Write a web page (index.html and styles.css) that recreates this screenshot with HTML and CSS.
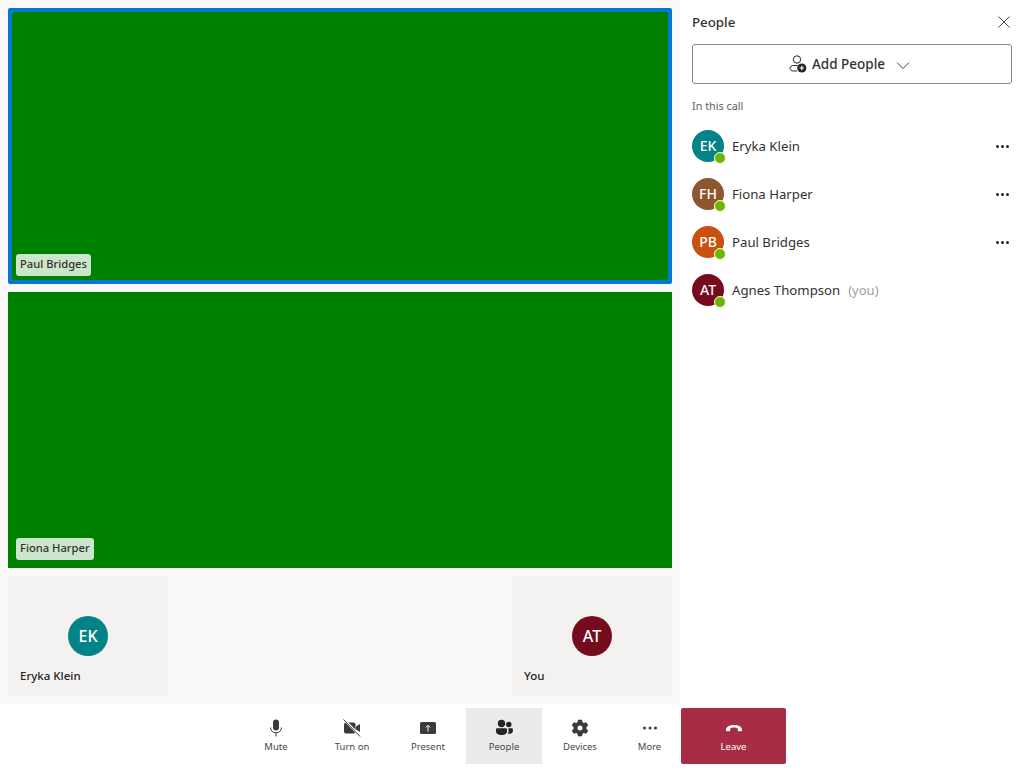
FILE: index.html
```html
<!DOCTYPE html>
<html lang="en">
<head>
    <meta charset="UTF-8">
    <title>People</title>
    <link rel="stylesheet" href="styles.css">
</head>
<body>
    <div class="top">
        <main class="stage">
            <section class="video video-active">
                <span class="name-tag">Paul Bridges</span>
            </section>
            <section class="video">
                <span class="name-tag">Fiona Harper</span>
            </section>
            <div class="tile-row">
                <div class="tile">
                    <span class="avatar avatar-big teal">EK</span>
                    <span class="tile-name">Eryka Klein</span>
                </div>
                <div class="tile">
                    <span class="avatar avatar-big maroon">AT</span>
                    <span class="tile-name">You</span>
                </div>
            </div>
        </main>
        <aside class="panel">
            <div class="panel-head">
                <h2>People</h2>
                <svg class="close-icon" width="14" height="14" viewBox="0 0 14 14"><path d="M1.5 1.5l11 11M12.5 1.5l-11 11" stroke="#484644" stroke-width="1" fill="none"/></svg>
            </div>
            <button class="add-btn">
                <svg width="20" height="20" viewBox="0 0 20 20"><circle cx="9" cy="5.5" r="3.7" fill="none" stroke="#252423" stroke-width="1"/><path d="M9.5 11.5H5.5C3.5 11.5 2 12.6 2 14.3C2 16 3.5 17 5.5 17H9" fill="none" stroke="#252423" stroke-width="1"/><circle cx="13.8" cy="14" r="4.6" fill="#252423"/><path d="M13.8 11.8v4.4M11.6 14h4.4" stroke="#fff" stroke-width="1.2"/></svg>
                <span>Add People</span>
                <svg class="chevron" width="14" height="14" viewBox="0 0 14 14"><path d="M1 4.5L7 10.500l6-6" fill="none" stroke="#484644" stroke-width="1"/></svg>
            </button>
            <p class="section-label">In this call</p>
            <ul class="people">
                <li>
                    <span class="avatar teal">EK<i class="status"></i></span>
                    <span class="person">Eryka Klein</span>
                    <span class="dots"><i></i><i></i><i></i></span>
                </li>
                <li>
                    <span class="avatar brown">FH<i class="status"></i></span>
                    <span class="person">Fiona Harper</span>
                    <span class="dots"><i></i><i></i><i></i></span>
                </li>
                <li>
                    <span class="avatar orange">PB<i class="status"></i></span>
                    <span class="person">Paul Bridges</span>
                    <span class="dots"><i></i><i></i><i></i></span>
                </li>
                <li>
                    <span class="avatar maroon">AT<i class="status"></i></span>
                    <span class="person">Agnes Thompson</span>
                    <span class="you">(you)</span>
                </li>
            </ul>
        </aside>
    </div>
    <nav class="toolbar">
        <button class="tool">
            <svg width="20" height="20" viewBox="0 0 20 20"><rect x="7" y="1.5" width="6" height="11" rx="3" fill="#3b3a39"/><path d="M4.5 9.5c0 3.2 2.4 5.3 5.5 5.3s5.500-2.100 5.500-5.300M10 15v3.500" fill="none" stroke="#3b3a39" stroke-width="1"/></svg>
            <span>Mute</span>
        </button>
        <button class="tool">
            <svg width="20" height="20" viewBox="0 0 20 20"><rect x="2" y="4.500" width="11.500" height="11" rx="2" fill="#3b3a39"/><path d="M14 8.500l4-2.500v8l-4-2.500z" fill="#3b3a39"/><path d="M2 1.500L18 18" stroke="#fff" stroke-width="2.400"/><path d="M1.500 1.500L18 18.500" stroke="#3b3a39" stroke-width="1"/></svg>
            <span>Turn on</span>
        </button>
        <button class="tool">
            <svg width="20" height="20" viewBox="0 0 20 20"><rect x="2" y="4" width="16" height="12" rx="1.500" fill="#3b3a39"/><path d="M10 13.500V7.500M7.800 9.500L10 7.300l2.200 2.200" fill="none" stroke="#fff" stroke-width="1"/></svg>
            <span>Present</span>
        </button>
        <button class="tool tool-on">
            <svg width="20" height="20" viewBox="0 0 20 20"><circle cx="7.500" cy="5.500" r="3.700" fill="#252423"/><circle cx="14.800" cy="6.500" r="2.700" fill="#252423"/><path d="M2 11.500c0-.8.600-1.300 1.300-1.300h8.400c.7 0 1.300.5 1.300 1.300v2c0 2.100-2.300 3.500-5.500 3.500S2 15.600 2 13.500z" fill="#252423"/><path d="M14 10.200h3.600c.7 0 1.300.5 1.300 1.300v1.500c0 2-1.800 3-4.800 3 .3-.7.400-1.500.400-2.500v-2c0-.700-.100-1.200-.500-1.800z" fill="#252423"/></svg>
            <span>People</span>
        </button>
        <button class="tool">
            <svg width="20" height="20" viewBox="0 0 20 20"><path fill-rule="evenodd" fill="#3b3a39" d="M8 1.800h4l.6 2.400 1.200.7 2.400-.7 2 3.400-1.800 1.700v1.400l1.800 1.700-2 3.400-2.400-.7-1.200.7-.6 2.400H8l-.6-2.400-1.200-.7-2.400.7-2-3.400 1.800-1.700V9.300L1.800 7.600l2-3.400 2.400.7 1.200-.7zM10 7.500a2.500 2.500 0 1 0 0 5 2.500 2.500 0 0 0 0-5z"/></svg>
            <span>Devices</span>
        </button>
        <button class="tool tool-more">
            <svg width="20" height="20" viewBox="0 0 20 20"><circle cx="4.500" cy="10" r="1.500" fill="#3b3a39"/><circle cx="10" cy="10" r="1.500" fill="#3b3a39"/><circle cx="15.500" cy="10" r="1.500" fill="#3b3a39"/></svg>
            <span>More</span>
        </button>
        <button class="tool tool-leave">
            <svg width="20" height="20" viewBox="0 0 20 20"><path fill="#fff" d="M2 11.500C2 9 5.500 7 10 7s8 2 8 4.500v.8c0 .6-.5 1-1 1h-2.200c-.6 0-1-.4-1-1v-1.500c0-.7-1.800-1.300-3.800-1.300s-3.800.6-3.800 1.300v1.500c0 .6-.4 1-1 1H3c-.5 0-1-.4-1-1z"/></svg>
            <span>Leave</span>
        </button>
    </nav>
</body>
</html>
```

FILE: styles.css
```css
* {
    box-sizing: border-box;
}
html, body {
    height: 100%;
}
body {
    margin: 0;
    font-family: "Noto Sans", "Open Sans", Arial, sans-serif;
    color: #252423;
    background: #fff;
    display: flex;
    flex-direction: column;
    overflow: hidden;
}
.top {
    display: flex;
    height: 704px;
}

/* call area */
.stage {
    width: 680px;
    padding: 8px;
    background: #faf9f8;
    display: flex;
    flex-direction: column;
    gap: 8px;
}
.video {
    height: 276px;
    background: #008000;
    display: flex;
    align-items: flex-end;
    padding: 8px;
    flex: none;
}
.video-active {
    border: 4px solid #0078d4;
    border-radius: 2px;
    padding: 4px;
}
.name-tag {
    height: 22px;
    padding: 0 4px;
    font-size: 11.200px;
    line-height: 20px;
    font-weight: 500;
    color: #323130;
    background: rgba(255, 255, 255, 0.8);
    border-radius: 3px;
}
.tile-row {
    display: flex;
    justify-content: space-between;
}
.tile {
    width: 160px;
    height: 120px;
    background: #f3f2f1;
    border-radius: 4px;
    padding: 40px 12px 0;
    display: flex;
    flex-direction: column;
}
.tile .avatar {
    align-self: center;
}
.tile-name {
    margin-top: 11px;
    font-size: 11.500px;
    line-height: 18px;
    font-weight: 500;
}

/* avatars */
.avatar {
    position: relative;
    flex: none;
    width: 32px;
    height: 32px;
    border-radius: 50%;
    color: #fff;
    font-size: 14px;
    font-weight: 500;
    display: flex;
    align-items: center;
    justify-content: center;
    padding-bottom: 1px;
}
.avatar-big {
    width: 40px;
    height: 40px;
    font-size: 16px;
}
.teal { background: #038387; }
.brown { background: #8e562e; }
.orange { background: #ca5010; }
.maroon { background: #750b1c; }
.status {
    position: absolute;
    right: -2px;
    bottom: -2px;
    width: 12px;
    height: 12px;
    border-radius: 50%;
    background: #6bb700;
    border: 1.5px solid #fff;
}

/* people panel */
.panel {
    flex: 1;
    padding: 0 12px;
    background: #fff;
}
.panel-head {
    height: 44px;
    display: flex;
    align-items: center;
    justify-content: space-between;
}
.panel-head h2 {
    margin: 0 0 1px;
    font-size: 13.300px;
    font-weight: 500;
    color: #323130;
}
.close-icon {
    margin-right: 1px;
}
.add-btn {
    width: 100%;
    height: 40px;
    display: flex;
    align-items: center;
    justify-content: center;
    gap: 4px;
    padding: 0 6px 1px 0;
    background: #fff;
    border: 1px solid #8a8886;
    border-radius: 3px;
    font-family: inherit;
    font-size: 13.500px;
    font-weight: 500;
    color: #323130;
}
.chevron {
    margin-left: 7px;
    margin-top: 3px;
}
.section-label {
    margin: 14px 0 8px;
    font-size: 10.800px;
    line-height: 16px;
    color: #605e5c;
}
.people {
    list-style: none;
    margin: 0;
    padding: 0;
}
.people li {
    height: 48px;
    display: flex;
    align-items: center;
}
.person {
    margin: 0 0 1px 8px;
    font-size: 13.200px;
    color: #323130;
}
.you {
    margin: 0 0 1px 8px;
    font-size: 13px;
    color: #a19f9d;
}
.dots {
    margin-left: auto;
    margin-right: 3px;
    display: flex;
    gap: 2px;
}
.dots i {
    width: 3px;
    height: 3px;
    border-radius: 50%;
    background: #252423;
}

/* bottom toolbar */
.toolbar {
    height: 64px;
    padding: 4px 0;
    display: flex;
    justify-content: center;
    background: #fff;
}
.tool {
    width: 76px;
    border: 0;
    padding: 0 0 2px;
    background: none;
    font-family: inherit;
    font-size: 9.500px;
    color: #484644;
    display: flex;
    flex-direction: column;
    align-items: center;
    justify-content: center;
    gap: 2px;
}
.tool svg {
    display: block;
}
.tool-on {
    background: #ebebeb;
}
.tool-more {
    width: 63px;
}
.tool-leave {
    width: 105px;
    background: #a72d45;
    color: #fff;
    border-radius: 2px;
}
```
